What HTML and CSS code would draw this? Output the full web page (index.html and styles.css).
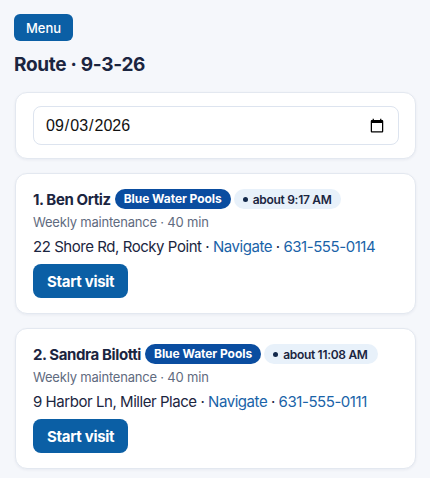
FILE: index.html
```html
<!DOCTYPE html>
<html>
<head>
<meta charset="utf-8">
<link rel="stylesheet" href="styles.css">
</head>
<body>
<div class="page">
  <button class="menu-btn">Menu</button>
  <h1 class="title">Route · 9-3-26</h1>
  <div class="card date-card">
    <input class="date-input" type="date" value="2026-09-03">
  </div>
  <div class="card stop">
    <div class="stop-head">
      <span class="stop-name">1. Ben Ortiz</span>
      <span class="badge">Blue Water Pools</span>
      <span class="eta"><span class="dot"></span>about 9:17 AM</span>
    </div>
    <div class="stop-sub">Weekly maintenance · 40 min</div>
    <div class="stop-addr">22 Shore Rd, Rocky Point · <a class="link" href="#">Navigate</a> · <a class="link" href="#">631-555-0114</a></div>
    <button class="start-btn">Start visit</button>
  </div>
  <div class="card stop">
    <div class="stop-head">
      <span class="stop-name">2. Sandra Bilotti</span>
      <span class="badge">Blue Water Pools</span>
      <span class="eta"><span class="dot"></span>about 11:08 AM</span>
    </div>
    <div class="stop-sub">Weekly maintenance · 40 min</div>
    <div class="stop-addr">9 Harbor Ln, Miller Place · <a class="link" href="#">Navigate</a> · <a class="link" href="#">631-555-0111</a></div>
    <button class="start-btn">Start visit</button>
  </div>
</div>
</body>
</html>
```

FILE: styles.css
```css
* { box-sizing: border-box; }
html, body { margin: 0; padding: 0; background: #f5f7fb; }
body { font-family: Inter, "Noto Sans", sans-serif; color: #1b2540; }
.page {
  padding: 14px 14px;
  display: flex;
  flex-direction: column;
  align-items: stretch;
}
.menu-btn {
  align-self: flex-start;
  background: #0b5fa5;
  color: #fff;
  border: none;
  border-radius: 6px;
  height: 27px;
  padding: 0 12px;
  font-family: inherit;
  font-size: 13px;
  font-weight: 500;
}
.title {
  margin: 12px 0 15px;
  font-size: 19px;
  line-height: 24px;
  font-weight: 700;
  letter-spacing: -0.3px;
  color: #1b2540;
}
.card {
  background: #fff;
  border: 1px solid #e3e8f0;
  border-radius: 12px;
  box-shadow: 0 1px 3px rgba(20, 40, 80, 0.06);
  margin: 0 0 14px 1px;
  width: 401px;
}
.date-card { padding: 13px 16px 13px 17px; }
.date-input {
  width: 100%;
  height: 39px;
  border: 1px solid #dde4ef;
  border-radius: 8px;
  padding: 0 11px;
  font-family: "Liberation Sans", Arial, sans-serif;
  font-size: 16px;
  color: #111;
  background: #fff;
}
.stop { padding: 15px 16px 15px 17px; }
.stop-head {
  display: flex;
  align-items: center;
  gap: 3px;
  height: 20px;
}
.stop-name {
  font-size: 15px;
  font-weight: 700;
  letter-spacing: -0.4px;
  margin-right: 1px;
}
.badge {
  background: #0a4da0;
  color: #fff;
  font-size: 12px;
  font-weight: 700;
  letter-spacing: -0.05px;
  border-radius: 10px;
  height: 20px;
  line-height: 20px;
  padding: 0 9px;
}
.eta {
  display: inline-flex;
  align-items: center;
  gap: 5px;
  background: #e8f1fa;
  color: #1b2540;
  font-size: 12px;
  font-weight: 600;
  letter-spacing: -0.3px;
  border-radius: 10px;
  height: 20px;
  padding: 0 10px 0 9px;
}
.dot {
  width: 5px;
  height: 5px;
  border-radius: 50%;
  background: #13294b;
}
.stop-sub {
  margin-top: 4px;
  font-size: 13px;
  line-height: 18px;
  letter-spacing: -0.2px;
  color: #5f6b80;
}
.stop-addr {
  margin-top: 6px;
  font-size: 15px;
  line-height: 20px;
  letter-spacing: -0.45px;
  color: #1b2540;
}
.link { color: #1a63a8; text-decoration: none; }
.start-btn {
  margin-top: 7px;
  background: #0b5fa5;
  color: #fff;
  border: none;
  border-radius: 8px;
  height: 34px;
  padding: 0 14px;
  font-family: inherit;
  font-size: 15px;
  font-weight: 700;
  letter-spacing: -0.3px;
}
```
